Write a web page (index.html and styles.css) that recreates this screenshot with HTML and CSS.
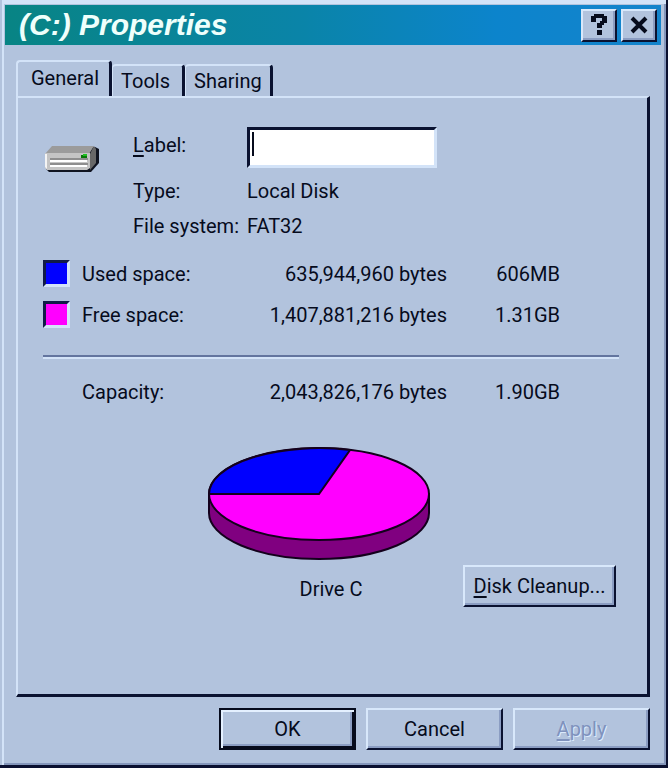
FILE: index.html
```html
<!DOCTYPE html>
<html lang="en">
<head>
  <meta charset="UTF-8">
  <title>(C:) Properties</title>
  <link rel="stylesheet" href="styles.css">
</head>
<body>
<form class="window">
  <header class="titlebar">
    <h1 class="titlebar__text">(C:) Properties</h1>
    <button type="button" class="btn btn--title" aria-label="Help">
      <svg width="18" height="24" viewBox="0 0 18 24" shape-rendering="crispEdges">
        <path d="M4 1h10v2h3v7h-3v2h-2v3H7v-5h3V8h2V5H6v4H1V3h3z M7 17h5v5H7z"/>
      </svg>
    </button>
    <button type="button" class="btn btn--title" aria-label="Close">
      <svg width="18" height="18" viewBox="0 0 18 18">
        <path d="M2 2L16 16M16 2L2 16" fill="none" stroke="#060b1c" stroke-width="4"/>
      </svg>
    </button>
  </header>

  <main class="sheet">
    <nav class="tabs">
      <button type="button" class="tab tab--active">General</button>
      <button type="button" class="tab">Tools</button>
      <button type="button" class="tab">Sharing</button>
    </nav>

    <section class="panel">
      <div class="info">
        <svg class="info__icon" width="56" height="28" viewBox="0 0 56 28">
          <path d="M9 1h42l4 2v14l-8 9H5l-3-3z" fill="#101420"/>
          <path d="M8 0h42l-5 8H1z" fill="#9b9b9b"/>
          <path d="M50 0l2 3v14l-6 7V8z" fill="#686868"/>
          <path d="M1 7h45v15l-3 2H3l-2-2z" fill="#c4c4c4"/>
          <path d="M1 8v13l2 2V8z" fill="#f4f4f4"/>
          <path d="M6 13h38M6 18h38" stroke="#585858"/>
          <path d="M6 15h37M6 20h37" stroke="#fff" stroke-width="2"/>
          <path d="M37 9h6v3h-6z" fill="#087808"/>
          <path d="M39 8h4v2h-4z" fill="#20c020"/>
        </svg>
        <label class="info__name" for="label"><u>L</u>abel:</label>
        <input class="info__input" type="text" id="label">
        <span class="info__name">Type:</span>
        <span>Local Disk</span>
        <span class="info__name">File system:</span>
        <span>FAT32</span>
      </div>

      <table class="space">
        <tr>
          <td class="space__key"><i class="swatch swatch--used"></i></td>
          <th>Used space:</th>
          <td class="space__bytes">635,944,960 bytes</td>
          <td class="space__size">606MB</td>
          <td></td>
        </tr>
        <tr>
          <td class="space__key"><i class="swatch swatch--free"></i></td>
          <th>Free space:</th>
          <td class="space__bytes">1,407,881,216 bytes</td>
          <td class="space__size">1.31GB</td>
          <td></td>
        </tr>
        <tr class="space__total">
          <td class="space__key"></td>
          <th>Capacity:</th>
          <td class="space__bytes">2,043,826,176 bytes</td>
          <td class="space__size">1.90GB</td>
          <td></td>
        </tr>
      </table>

      <div class="usage">
        <figure class="chart">
          <svg width="224" height="114" viewBox="0 0 224 114" stroke="#14001c" stroke-width="2">
            <path d="M2 47v19a110 46 0 0 0 220 0v-19z" fill="#800080"/>
            <ellipse cx="112" cy="47" rx="110" ry="46" fill="#f0f"/>
            <path d="M112 47H2A110 46 0 0 1 143 3z" fill="#00f"/>
          </svg>
          <figcaption>Drive C</figcaption>
        </figure>
        <button type="button" class="btn btn--cleanup"><u>D</u>isk Cleanup...</button>
      </div>
    </section>
  </main>

  <footer class="actions">
    <button type="button" class="btn btn--action btn--default">OK</button>
    <button type="button" class="btn btn--action">Cancel</button>
    <button type="button" class="btn btn--action" disabled><u>A</u>pply</button>
  </footer>
</form>
</body>
</html>
```

FILE: styles.css
```css
* {
  box-sizing: border-box;
}
body {
  margin: 0;
  padding-right: 2px;
  background: #fbfcff;
  color: #060b1c;
  font: 20px/24px Roboto, "Liberation Sans", Arial, sans-serif;
}
button,
input {
  font: inherit;
  color: inherit;
}
u {
  text-decoration-thickness: 2px;
  text-underline-offset: 3px;
  text-decoration-skip-ink: none;
}

.window {
  display: flex;
  flex-direction: column;
  min-height: 100vh;
  padding: 2px 2px 0 2px;
  background: #b2c3dd;
  border: solid #0a1030;
  border-width: 0 2px 3px 0;
  box-shadow: inset 2px 0 #b2c3dd, inset 4px 4px #d3e3f8, inset -2px -2px #8496bb;
}

.titlebar {
  display: flex;
  align-items: center;
  gap: 4px;
  height: 40px;
  margin: 3px 3px 0;
  padding: 0 4px 0 14px;
  background: linear-gradient(90deg, #088484, #0a84a8 45%, #0c84cc 75%, #1484cc);
}
.titlebar__text {
  flex: 1;
  margin: 0;
  color: #effffb;
  font-family: "Liberation Sans", Arial, sans-serif;
  font-size: 30px;
  font-style: italic;
  font-weight: 700;
  line-height: 40px;
}

.btn {
  display: flex;
  align-items: center;
  justify-content: center;
  padding: 0;
  background: #b2c3dd;
  border: 2px solid;
  border-color: #d8e8fb #0a1230 #0a1230 #d8e8fb;
  border-radius: 0;
  box-shadow: inset -2px -2px #8b9dc2;
}
.btn--title {
  width: 36px;
  height: 33px;
  fill: #060b1c;
}
.btn--cleanup {
  width: 153px;
  height: 42px;
  margin-right: 3px;
}
.btn--action {
  width: 137px;
  height: 42px;
}
.btn--default {
  border-color: #060b1c;
  box-shadow: inset 2px 2px #e4f0ff, inset -2px -2px #060b1c, inset -4px -4px #8b9dc2;
}
.btn:disabled {
  color: #7f92bd;
  text-shadow: 1px 1px #dceafc;
}

.sheet {
  flex: 1;
  display: flex;
  flex-direction: column;
  margin: 15px 14px 0;
}
.tabs {
  display: flex;
  align-items: flex-end;
}
.tab {
  min-width: 73px;
  height: 32px;
  padding: 0 8px;
  background: #b2c3dd;
  border: solid;
  border-width: 2px 3px 0 1px;
  border-color: #d3e3f8 #0a1230 #d3e3f8 #d3e3f8;
  border-radius: 4px 4px 0 0;
  text-align: left;
}
.tab--active {
  height: 38px;
  margin-bottom: -2px;
  padding: 0 10px 4px 13px;
  border-left-width: 2px;
}
.panel {
  flex: 1;
  padding: 29px 28px 20px 25px;
  border: solid;
  border-width: 2px 3px 3px 2px;
  border-color: #d3e3f8 #0a1230 #0a1230 #d3e3f8;
}

.info {
  display: grid;
  grid-template-columns: 90px 114px 1fr;
  row-gap: 11px;
}
.info__icon {
  grid-row: 1 / span 2;
  margin: 19px 0 0 1px;
}
.info__name {
  grid-column: 2;
}
label.info__name {
  padding-top: 6px;
}
.info__input {
  width: 190px;
  height: 41px;
  padding: 0 8px;
  border: 3px solid;
  border-color: #0a1230 #d3e3f8 #d3e3f8 #0a1230;
  border-radius: 0;
  outline: none;
  background: #fff linear-gradient(#060b1c, #060b1c) 2px 2px / 2px 24px no-repeat;
}

.space {
  width: 100%;
  margin-top: 15px;
  border-collapse: collapse;
}
.space td,
.space th {
  height: 41px;
  padding: 0;
  font-weight: 400;
  text-align: left;
}
.space .space__key {
  width: 39px;
}
.space .space__bytes {
  width: 240px;
  text-align: right;
}
.space .space__size {
  width: 113px;
  text-align: right;
}
.space th {
  width: 125px;
}
.space .space__total td,
.space .space__total th {
  height: 77px;
  padding-top: 36px;
}
/* etched divider above the total */
.space__total {
  background: linear-gradient(#63759f 2px, #d3e3f8 2px, #d3e3f8 4px, transparent 4px) 0 20px no-repeat;
}
.swatch {
  display: block;
  width: 27px;
  height: 27px;
  border: 3px solid;
  border-color: #101a48 #d3e3f8 #d3e3f8 #101a48;
}
.swatch--used {
  background: #00f;
}
.swatch--free {
  background: #f0f;
}

.usage {
  display: grid;
  grid-template-columns: 1fr auto 1fr;
  align-items: end;
  margin-top: 35px;
}
.chart {
  grid-column: 2;
  margin: 0 0 6px;
  text-align: center;
}
.chart svg {
  display: block;
  margin: 0 24px 16px 0;
}
.usage .btn {
  justify-self: end;
}

.actions {
  display: flex;
  justify-content: flex-end;
  gap: 10px;
  margin: 11px 14px 15px;
}
```
